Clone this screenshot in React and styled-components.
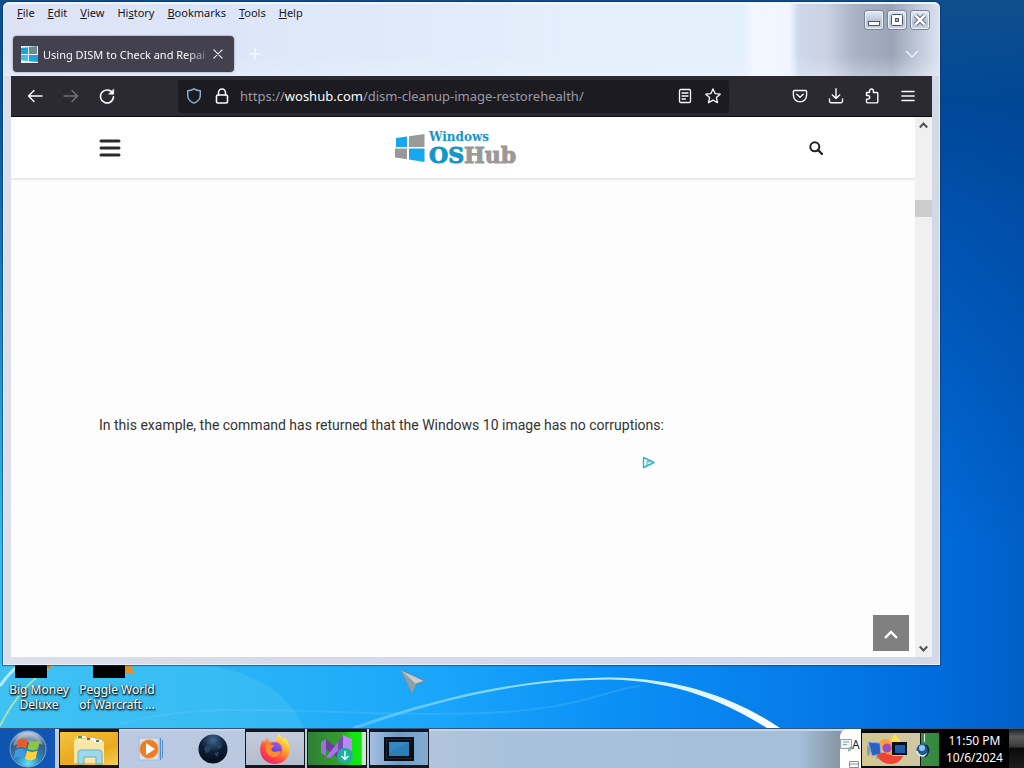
import React from "react";
import styled, { createGlobalStyle, css } from "styled-components";

const Global = createGlobalStyle`
  *, *::before, *::after { box-sizing: border-box; }
  html, body, #root { height: 100%; }
  body { margin: 0; overflow: hidden; font-family: "Noto Sans", "Open Sans", sans-serif; font-size: 12px; }
  button { border: 0; padding: 0; margin: 0; background: none; font: inherit; color: inherit; }
  svg { display: block; flex: none; }
`;

/* ---------- desktop ---------- */

const Desktop = styled.div`
  display: flex;
  flex-direction: column;
  min-height: 100vh;
  background: #005fd0;
`;

const Workspace = styled.main`
  position: relative;
  flex: 1;
  display: flex;
  flex-direction: column;
  justify-content: flex-end;
  overflow: hidden;
  background:
    linear-gradient(#0f4f8c 0%, rgba(0, 66, 140, 0.85) 14%, rgba(0, 68, 150, 0.65) 30%, rgba(0, 78, 180, 0) 75%),
    linear-gradient(90deg, #35bdf2 0%, #28b2f6 25%, #1aa7fb 42%, #0b90f6 60%, #067ce9 78%, #006bdb 92%, #005fc8 100%);
`;

const Wallpaper = styled.svg`
  position: absolute;
  left: 0;
  bottom: 0;
  width: 100%;
  height: 64px;
`;

const Shortcuts = styled.ul`
  position: relative;
  display: flex;
  margin: 0;
  padding: 0 0 16px;
  list-style: none;
`;

const Shortcut = styled.li`
  display: flex;
  flex-direction: column;
  align-items: center;
  gap: 4px;
  width: 78px;
  color: #fff;
  line-height: 15px;
  text-align: center;
  text-shadow: 0 1px 2px #000, 1px 1px 2px #000;
  white-space: nowrap;
`;

const Pointer = styled.svg`
  position: absolute;
  left: 399px;
  bottom: 32px;
`;

/* ---------- browser window ---------- */

const Window = styled.section`
  position: absolute;
  inset: 2px 84px 63px 3px;
  display: flex;
  flex-direction: column;
  padding: 0 8px 8px;
  border-radius: 6px 6px 0 0;
  background: linear-gradient(90deg, #dcdfea 0%, #d5dae8 30%, #ced9f2 70%, #d3d8e6 100%);
  box-shadow: inset 0 0 0 1px #e6effb, 0 0 1px 1px rgba(10, 50, 110, 0.6);
`;

const TitleArea = styled.header`
  display: flex;
  justify-content: space-between;
  height: 74px;
  margin: 0 -7px;
  padding: 0 9px 4px;
  border-radius: 6px 6px 0 0;
  border-top: 2px solid #eef5fc;
  background:
    linear-gradient(rgba(240, 245, 255, 0) 72%, rgba(240, 245, 255, 0.35) 100%),
    linear-gradient(90deg, #dde3f5 0, #dce6f8 25%, #e3effb 60%, #e4effc 79%, #f1f6ff 80%, #f1f5ff 84%, #cdd8ec 85%, #c9d1e2 88%, #a8b2c5 91%, #9aa5b8 95%, #c3cbda 98%, #d9e2f2 100%);
`;

const TitleLeft = styled.div`
  display: flex;
  flex-direction: column;
  justify-content: space-between;
`;

const TitleRight = styled.div`
  display: flex;
  flex-direction: column;
  justify-content: space-between;
  align-items: flex-end;
  padding: 6px 0 10px;
`;

const MenuBar = styled.nav`
  display: flex;
  gap: 1px;
  margin-left: -2px;
`;

const MenuItem = styled.button`
  padding: 0 6px;
  color: #15151c;
  font-size: 11px;
  line-height: 18px;
`;

const TabStrip = styled.div`
  display: flex;
  align-items: center;
  gap: 13px;
  height: 36px;
`;

const Tab = styled.div`
  display: flex;
  align-items: center;
  width: 221px;
  height: 36px;
  padding: 0 8px;
  border-radius: 4px;
  background: #42414d;
  box-shadow: 0 0 2px rgba(0, 0, 0, 0.5);
  color: #fbfbfe;
`;

const TabTitle = styled.span`
  flex: 1;
  margin: 0 0 0 5px;
  font-size: 11px;
  white-space: nowrap;
  mask-image: linear-gradient(90deg, #000 86%, transparent 102%);
`;

const SmallButton = styled.button`
  display: flex;
  align-items: center;
  justify-content: center;
  width: 16px;
  height: 16px;
`;

const WindowControls = styled.div`
  display: flex;
  gap: 3px;
`;

const WindowControl = styled.button`
  display: flex;
  align-items: center;
  justify-content: center;
  width: 20px;
  height: 20px;
  border: 1px solid #77839a;
  border-radius: 3px;
  background: linear-gradient(#e4eaf6, #b9c3d6 60%, #c9d2e3);
  box-shadow: inset 0 0 0 1px #eef3fc;
`;

const TabListSlot = styled.div`
  padding-right: 10px;
`;

const Toolbar = styled.div`
  display: flex;
  align-items: center;
  height: 41px;
  padding: 0 6px;
  background: #2b2a33;
  border-bottom: 1px solid #0c0c0d;
`;

const ToolButton = styled.button`
  display: flex;
  align-items: center;
  justify-content: center;
  width: ${(p) => (p.$narrow ? 28 : 36)}px;
  height: 32px;
  color: ${(p) => (p.$dim ? "#73727c" : "#fbfbfe")};
`;

const UrlBar = styled.div`
  flex: 1;
  display: flex;
  align-items: center;
  height: 33px;
  margin: 0 53px;
  padding: 0 2px;
  border-radius: 3px;
  background: #1c1b22;
`;

const UrlField = styled.label`
  position: relative;
  flex: 1;
  display: flex;
  margin-left: 4px;
  font-size: 13px;
  line-height: 20px;
  white-space: nowrap;
`;

const UrlInput = styled.input`
  position: absolute;
  inset: 0;
  width: 100%;
  border: 0;
  padding: 0;
  background: transparent;
  color: transparent;
  font: inherit;
  outline: 0;
`;

const UrlText = styled.span`
  color: #9b9aa3;
  b { color: #fbfbfe; font-weight: 400; }
`;

/* ---------- web page ---------- */

const Viewport = styled.div`
  flex: 1;
  display: flex;
  min-height: 0;
  background: #fdfdfd;
`;

const Page = styled.div`
  position: relative;
  flex: 1;
  min-width: 0;
  overflow: hidden;
  color: #333;
`;

const SiteHeader = styled.header`
  display: flex;
  align-items: center;
  justify-content: space-between;
  height: 62px;
  padding: 0 92px 0 88px;
  background: #fff;
  border-bottom: 1px solid #e6e6e6;
  box-shadow: 0 1px 2px rgba(0, 0, 0, 0.08);
`;

const SiteButton = styled.button`
  display: flex;
  align-items: center;
  justify-content: ${(p) => (p.$end ? "flex-end" : "flex-start")};
  width: ${(p) => (p.$end ? 32 : 22)}px;
  height: 32px;
`;

const Brand = styled.a`
  display: flex;
  align-items: center;
  gap: 4px;
  width: 122px;
  color: #1595c9;
  font-family: "DejaVu Serif", serif;
  font-weight: 700;
  text-decoration: none;
`;

const BrandName = styled.span`
  display: flex;
  flex-direction: column;
`;

const BrandTop = styled.span`
  font-size: 12px;
  line-height: 14px;
`;

const BrandMain = styled.span`
  font-size: 22px;
  line-height: 22px;
  -webkit-text-stroke: 1px currentColor;
  i { color: #999; font-style: normal; }
`;

const Article = styled.article`
  padding: 0 88px;
`;

const AdSlot = styled.div`
  height: 234px;
`;

const Paragraph = styled.p`
  margin: 0;
  font-family: Roboto, "Noto Sans", sans-serif;
  font-size: 14px;
  line-height: 24px;
  white-space: nowrap;
`;

const AdMarker = styled.div`
  display: flex;
  justify-content: flex-end;
  max-width: 556px;
  padding-top: 19px;
`;

const ToTop = styled.button`
  position: absolute;
  right: 6px;
  bottom: 6px;
  display: flex;
  align-items: center;
  justify-content: center;
  width: 36px;
  height: 36px;
  padding-top: 4px;
  background: #808080;
`;

const Scrollbar = styled.div`
  display: flex;
  flex-direction: column;
  width: 17px;
  background: #f0f0f0;
`;

const ScrollArrow = styled.button`
  display: flex;
  align-items: center;
  justify-content: center;
  height: 17px;
`;

const ScrollTrack = styled.div`
  flex: 1;
  padding-top: 66px;
`;

const ScrollThumb = styled.div`
  height: 17px;
  background: #cdcdcd;
`;

/* ---------- taskbar ---------- */

const Taskbar = styled.footer`
  display: flex;
  height: 40px;
  border-top: 1px solid #33577d;
  background: linear-gradient(90deg, #bccbe2 0, #b9c8de 35%, #a8c0dc 50%, #a5bfdb 78%, #8896a3 82%);
  box-shadow: inset 0 2px 0 #c5d5e6;
`;

const StartButton = styled.button`
  display: flex;
  align-items: center;
  justify-content: center;
  width: 55px;
  margin-right: 4px;
  background: linear-gradient(90deg, #0d55ae, #1455b8);
`;

const TaskList = styled.div`
  flex: 1;
  display: flex;
  gap: 2px;
`;

const running = css`
  border: solid #15171c;
  border-width: 3px 1px;
`;

const taskFill = {
  explorer: "linear-gradient(160deg, #f6c33c, #e8a91e 60%, #f7cf55)",
  firefox: "linear-gradient(#c3cbdc, #b4bdcd)",
  studio: "linear-gradient(90deg, #2f7f36, #35a02f 60%, #11e411 75%, #12e812 92%, #cfe8d0 93%)",
  remote: "linear-gradient(90deg, #a6bfe0, #6f9cc8 50%, #86abd0)",
};

const TaskButton = styled.button`
  display: flex;
  align-items: center;
  justify-content: center;
  width: 60px;
  background: ${(p) => taskFill[p.$fill] || "none"};
  ${(p) => p.$fill && running}
`;

const LanguagePanel = styled.div`
  display: flex;
  flex-direction: column;
  justify-content: space-between;
  width: 21px;
  border-top-left-radius: 8px;
  background: #fff;
  color: #222;
`;

const LanguageRow = styled.div`
  display: flex;
  align-items: center;
  padding-top: 8px;
  line-height: 16px;
`;

const LanguageExtra = styled.div`
  display: flex;
  justify-content: flex-end;
  padding-right: 2px;
`;

const Tray = styled.div`
  display: flex;
  align-items: center;
  width: 79px;
  border: solid #0b0b0c;
  border-width: 4px 1px 2px;
  background: linear-gradient(90deg, #d3c78f, #cfc7a6 75%, #3d8d45 76%, #33883c);
`;

const Clock = styled.time`
  display: flex;
  flex-direction: column;
  justify-content: center;
  width: 69px;
  background: #000;
  color: #fff;
  line-height: 17px;
  text-align: center;
  white-space: nowrap;
`;

const ShowDesktop = styled.button`
  width: 15px;
  background: linear-gradient(#222 0, #5a5a5a 20%, #3a3a3a 45%, #0b0b0b 50%, #1e1e1e);
`;

/* ---------- icons ---------- */

const Line = ({ size = 16, w = 1.4, children, ...rest }) => (
  <svg width={size} height={size} viewBox="0 0 16 16" fill="none" stroke="currentColor" strokeWidth={w} strokeLinecap="round" strokeLinejoin="round" aria-hidden="true" {...rest}>
    {children}
  </svg>
);

const BackIcon = () => <Line><path d="M15 8H1.5M7 2.5 1.5 8 7 13.5" /></Line>;
const ForwardIcon = () => <Line><path d="M1 8h13.5M9 2.5 14.500 8 9 13.5" /></Line>;
const ReloadIcon = () => (
  <Line w={1.6}>
    <path d="M13.600 5.200A6.500 6.500 0 1 0 14.500 8.800" />
    <path d="M14.700 1.300v4.900H9.800z" fill="currentColor" strokeWidth="0.600" />
  </Line>
);
const ShieldIcon = () => <Line color="#8fb4cf"><path d="M8 .8c2 1.300 4.300 1.900 6.300 2v4.400c0 3.600-2.600 6.400-6.300 8-3.700-1.600-6.300-4.400-6.300-8V2.800C3.700 2.700 6 2.100 8 .8z" /></Line>;
const LockIcon = () => <Line w={1.6}><rect x="2.500" y="7" width="11" height="8" rx="1.200" /><path d="M4.500 7V4.500a3.500 3.500 0 0 1 7 0V7" /></Line>;
const ReaderIcon = () => <Line w={1.3}><rect x="2.500" y="1.500" width="11" height="13" rx="1.200" /><path d="M5 5h6M5 8h6M5 11h3.500" /></Line>;
const StarIcon = () => <Line w={1.3}><path d="m8 .9 2.100 4.700 5.100.6-3.800 3.400 1.100 5.100L8 12.100l-4.500 2.600 1.100-5.100L.8 6.200l5.100-.6z" /></Line>;
const PocketIcon = () => <Line><path d="M2.400 2.500h11.200c.6 0 1 .4 1 1v3.800a6.600 6.600 0 0 1-13.200 0V3.500c0-.6.4-1 1-1z" /><path d="M4.800 6.300 8 9.300l3.200-3" /></Line>;
const DownloadIcon = () => <Line><path d="M8 .8v9.700M4.300 7 8 10.600 11.700 7M1.500 11v2.300c0 .8.600 1.400 1.400 1.400h10.200c.8 0 1.400-.6 1.400-1.400V11" /></Line>;
const PuzzleIcon = () => <Line><path d="M2.500 4.500h3V3a1.900 1.900 0 0 1 3.900 0v1.500h3.400c.6 0 1 .4 1 1v8.400c0 .6-.4 1-1 1H3.500c-.6 0-1-.4-1-1v-2.800h1.400a1.800 1.800 0 0 0 0-3.600H2.500z" /></Line>;
const MenuIcon = () => <Line w={1.500}><path d="M2 3.500h12M2 8h12M2 12.500h12" /></Line>;

const WosFavicon = () => (
  <svg width="17" height="17" viewBox="0 0 17 17" aria-hidden="true">
    <path fill="#e8f1f5" d="M0 0h17v17H0z" />
    <path fill="#1ca4dc" d="m0 2 7-.8V8H0zM8 9h9v7l-9-.8z" />
    <path fill="#6f8a94" d="M8 1l8-1v8H8z" />
    <path fill="#45bde9" d="M0 9h7v6l-7-.8z" />
  </svg>
);

const BrandMark = () => (
  <svg width="30" height="30" viewBox="0 0 30 30" aria-hidden="true">
    <path fill="#15a8ee" d="M1 5l11-1.500v10.500H1z" />
    <path fill="#999" d="M14 3.200 29.500 1v13H14z" />
    <path fill="#999" d="M0 15.500h12v10.700L0 24.500z" />
    <path fill="#15a8ee" d="M14 15.500h15.500V29L14 26.600z" />
  </svg>
);

const StartOrb = () => (
  <svg width="38" height="38" viewBox="0 0 38 38" aria-hidden="true">
    <defs>
      <radialGradient id="orb" cx="50%" cy="90%" r="85%">
        <stop offset="0" stopColor="#62e0ff" />
        <stop offset="0.400" stopColor="#2a85bd" />
        <stop offset="0.800" stopColor="#34587f" />
        <stop offset="1" stopColor="#a9c0d2" />
      </radialGradient>
    </defs>
    <circle cx="19" cy="19" r="18" fill="url(#orb)" stroke="#7ea6c2" />
    <path d="M4 16C6 7 13 3 19 3s13 4 15 12c-9-4-20-4-30 1z" fill="#fff" opacity=".35" />
    <path fill="#ea5a2b" d="M9 10c3.500-2 7-2 10 0l-2 8.500c-3.500-2-7-2-10 0z" />
    <path fill="#8dc63f" d="M20.500 10.500c3 2 7 1.800 10.500 0l-2 8.500c-3.500 1.800-7 2-10.500 0z" />
    <path fill="#3f9be0" d="M6.600 20c3.500-2 7-2 10 0l-2 8.500c-3.500-2-7-2-10 0z" />
    <path fill="#ffd23b" d="M18 20.500c3.500 2 7 1.800 10.500 0l-2 8.500c-3.500 1.800-7 2-10.500 0z" />
  </svg>
);

const ExplorerIcon = () => (
  <svg width="34" height="32" viewBox="0 0 34 32" aria-hidden="true">
    <path fill="#e9c765" d="M2 4h12l2 3h15v22H2z" />
    <path fill="#f8e9ac" d="M4 6h22l6 3v20H2V8z" />
    <path fill="#fff" d="M5 3h9v2H5zM14 5h9v2h-9zM22 7h8v2h-8z" />
    <path fill="#3aa35a" d="M6 3h4v2H6z" /><path fill="#d2412e" d="M15 5h3v2h-3z" /><path fill="#3a78c9" d="M24 7h3v2h-3z" />
    <path fill="#f8e7a4" d="M2 10h30v20H2z" />
    <path fill="#9ed8ea" stroke="#62afca" d="M6 31V20q0-3 3-3h18q3 0 3 3v11h-6v-7H12v7z" />
  </svg>
);

const MediaIcon = () => (
  <svg width="28" height="26" viewBox="0 0 28 26" aria-hidden="true">
    <path fill="#d7e4f3" stroke="#9bbbdc" d="M2 2h20v22H2z" />
    <path stroke="#4b8fd0" d="M23.500 2v22M25.500 4v18" />
    <circle cx="12" cy="13" r="9.500" fill="#ee7d26" stroke="#f8b375" />
    <path fill="#fff" d="m9 7 9 6-9 6z" />
  </svg>
);

const GlobeIcon = () => (
  <svg width="30" height="30" viewBox="0 0 30 30" aria-hidden="true">
    <defs>
      <radialGradient id="globe" cx="50%" cy="20%" r="80%">
        <stop offset="0" stopColor="#3f6890" /><stop offset="0.500" stopColor="#0e2038" /><stop offset="1" stopColor="#060d18" />
      </radialGradient>
    </defs>
    <circle cx="15" cy="15" r="14.500" fill="url(#globe)" />
    <path d="M6 14l4-3 3 3-2 4-3 1zM17 10l5-1 2 4-4 2zM16 19l5-1-2 5z" fill="#28445f" />
  </svg>
);

const FirefoxIcon = ({ size = 32 }) => (
  <svg width={size} height={size} viewBox="0 0 32 32" aria-hidden="true">
    <defs>
      <linearGradient id="fox" x1="0.850" y1="0.100" x2="0.200" y2="1">
        <stop offset="0" stopColor="#fff44f" /><stop offset="0.350" stopColor="#ffa02c" /><stop offset="0.650" stopColor="#ff4a45" /><stop offset="1" stopColor="#e82064" />
      </linearGradient>
      <linearGradient id="core" x1="0.700" y1="0" x2="0.300" y2="1">
        <stop offset="0" stopColor="#a356e6" /><stop offset="1" stopColor="#4d3fc4" />
      </linearGradient>
    </defs>
    <path fill="url(#fox)" d="M20 1c2 1.500 3 3.500 3.500 5.500 1-.3 1.800-1 2-2C29 8 31 12.500 30.800 17 30.400 25 24 31 16 31S1.200 25 1.200 17C1.200 13.500 2 10 4 7c.2 1 .6 1.700 1 2.200C6 7 7.500 5.500 9 4.500c0 1.700.6 3 1.500 4 2.500-.8 5 0 6.500 1.500C16.500 6.500 17.500 3 20 1z" />
    <circle cx="16" cy="16" r="7" fill="url(#core)" />
    <path fill="#ff8a2e" d="M7 12c3-1.500 5-.8 8 .6 1 .8-2 1.500-2.600 3.400-.3 1.500 1.200 2.800 3.100 2.800 2.300 0 4-1 6.500-.4-1.500 4.500-5 6-8 5.500C9 23 5 18 7 12z" />
  </svg>
);

const StudioIcon = () => (
  <svg width="34" height="32" viewBox="0 0 34 32" aria-hidden="true">
    <path fill="#6c3fa0" d="M1 9l5-3 20 17-4 5L6 16z" />
    <path fill="#9c72d8" d="M1 9l5-3v17l-5-3z" />
    <path fill="#a578e0" d="M6 24 24 2v10L10 25z" />
    <path fill="#b98bee" d="M23 2l9 4v18l-9 4z" />
    <path fill="#7a4ab8" d="M23 2v24l-5-6V9z" />
    <circle cx="25" cy="23" r="8" fill="#1fae9c" />
    <path d="M25 18v8M21.500 23l3.500 3.500 3.500-3.500" fill="none" stroke="#e6fffa" strokeWidth="1.500" />
  </svg>
);

const RemoteIcon = () => (
  <svg width="30" height="24" viewBox="0 0 30 24" aria-hidden="true">
    <path fill="#0a0d12" d="M0 0h30v24H0z" />
    <path fill="#1a2a3a" d="M2 2h26v20H2z" />
    <path fill="#0a0d12" d="M3 3h25v18H3z" />
    <path fill="#2d7db8" d="M5 5h20v14H5z" />
    <path fill="#3a93cf" d="M5 5h20L5 15z" opacity=".5" />
  </svg>
);

const TrayIcons = () => (
  <svg width="77" height="33" viewBox="0 0 77 33" aria-hidden="true">
    <path fill="#2b62c4" stroke="#8fb2e4" d="M6 9l12 1 1 11-9 2z" />
    <path fill="#8a9bb5" d="M5 12l4 4-2 7-2-1zM15 21l4 4-5 1z" />
    <path fill="#ef4433" d="M15 22c3-2 7-3 11-2l5 3h10c-2 5-7 8-12 8-6 0-12-3-14-9z" />
    <path fill="#ff9d3c" d="M18 8c4-3 8-2 11 0l9 2-8 12-5-1-6-5z" />
    <path fill="#ffe23b" d="M33 1l6 8H28z" />
    <circle cx="25" cy="15" r="4.500" fill="#a04bc0" />
    <path fill="#08101c" d="M30 9h15v13H30z" />
    <path fill="#1d5aa8" d="M33 12h10v8H33z" />
    <path fill="none" stroke="#111" d="M58.500 0v33" />
    <path fill="none" stroke="#e5efe9" d="M62.500 1v8" />
    <circle cx="61" cy="17" r="6.500" fill="#205a8d" />
    <circle cx="60" cy="15" r="3" fill="#8fc6ea" />
    <path fill="none" stroke="#e8f2f7" strokeWidth="1.500" d="M55 18c1 5 7 7 11 2" />
    <path fill="none" stroke="#10283f" strokeWidth="1.500" d="M64 12c4 4 3 9-1 12" />
  </svg>
);

/* ---------- composition ---------- */

const menus = ["File", "Edit", "View", "History", "Bookmarks", "Tools", "Help"];

const MenuLabel = ({ text }) => {
  const at = text === "History" ? 2 : 0;
  return (
    <MenuItem>
      {text.slice(0, at)}
      <u>{text[at]}</u>
      {text.slice(at + 1)}
    </MenuItem>
  );
};

const BrowserWindow = () => (
  <Window aria-label="Browser window">
    <TitleArea>
      <TitleLeft>
        <MenuBar>{menus.map((m) => <MenuLabel key={m} text={m} />)}</MenuBar>
        <TabStrip>
          <Tab>
            <WosFavicon />
            <TabTitle>Using DISM to Check and Repai</TabTitle>
            <SmallButton aria-label="Close tab"><Line size={12}><path d="M2.500 2.500l11 11M13.500 2.500l-11 11" /></Line></SmallButton>
          </Tab>
          <SmallButton aria-label="New tab"><Line size={14} color="#f4f8ff" w={1.600}><path d="M8 2v12M2 8h12" /></Line></SmallButton>
        </TabStrip>
      </TitleLeft>
      <TitleRight>
        <WindowControls>
          <WindowControl aria-label="Minimize">
            <svg width="14" height="14" viewBox="0 0 14 14"><rect x="1.500" y="8.500" width="11" height="4" fill="#fff" stroke="#4c566b" /></svg>
          </WindowControl>
          <WindowControl aria-label="Maximize">
            <svg width="14" height="14" viewBox="0 0 14 14"><rect x="1.500" y="1.500" width="11" height="11" rx="1" fill="#fff" stroke="#4c566b" /><rect x="5.500" y="5.500" width="3" height="3" fill="#a8b2c5" stroke="#4c566b" /></svg>
          </WindowControl>
          <WindowControl aria-label="Close">
            <svg width="14" height="14" viewBox="0 0 14 14"><path d="M2.500 2.500l9 9M11.500 2.500l-9 9" stroke="#4c566b" strokeWidth="4.500" /><path d="M2.500 2.500l9 9M11.500 2.500l-9 9" stroke="#fff" strokeWidth="2.500" /></svg>
          </WindowControl>
        </WindowControls>
        <TabListSlot>
          <SmallButton aria-label="List all tabs"><Line color="#eef4fb"><path d="M2.500 5.500 8 11l5.500-5.500" /></Line></SmallButton>
        </TabListSlot>
      </TitleRight>
    </TitleArea>

    <Toolbar>
      <ToolButton aria-label="Back"><BackIcon /></ToolButton>
      <ToolButton aria-label="Forward" $dim><ForwardIcon /></ToolButton>
      <ToolButton aria-label="Reload"><ReloadIcon /></ToolButton>
      <UrlBar>
        <ToolButton $narrow aria-label="Tracking protection"><ShieldIcon /></ToolButton>
        <ToolButton $narrow aria-label="Site information"><LockIcon /></ToolButton>
        <UrlField>
          <UrlText>https://<b>woshub.com</b>/dism-cleanup-image-restorehealth/</UrlText>
          <UrlInput aria-label="Address" type="text" />
        </UrlField>
        <ToolButton $narrow aria-label="Reader view"><ReaderIcon /></ToolButton>
        <ToolButton $narrow aria-label="Bookmark this page"><StarIcon /></ToolButton>
      </UrlBar>
      <ToolButton aria-label="Pocket"><PocketIcon /></ToolButton>
      <ToolButton aria-label="Downloads"><DownloadIcon /></ToolButton>
      <ToolButton aria-label="Extensions"><PuzzleIcon /></ToolButton>
      <ToolButton aria-label="Application menu"><MenuIcon /></ToolButton>
    </Toolbar>

    <Viewport>
      <Page>
        <SiteHeader>
          <SiteButton aria-label="Menu">
            <svg width="22" height="18" viewBox="0 0 22 18"><path d="M2 2h18M2 9h18M2 16h18" stroke="#2b2b2b" strokeWidth="3" strokeLinecap="round" /></svg>
          </SiteButton>
          <Brand href="#home">
            <BrandMark />
            <BrandName>
              <BrandTop>Windows</BrandTop>
              <BrandMain>OS<i>Hub</i></BrandMain>
            </BrandName>
          </Brand>
          <SiteButton $end aria-label="Search">
            <svg width="14" height="14" viewBox="0 0 14 14" fill="none" stroke="#222" strokeWidth="2"><circle cx="5.800" cy="5.800" r="4.500" /><path d="M9 9l4 4" strokeWidth="2.400" strokeLinecap="round" /></svg>
          </SiteButton>
        </SiteHeader>
        <Article>
          <AdSlot />
          <Paragraph>In this example, the command has returned that the Windows 10 image has no corruptions:</Paragraph>
          <AdMarker>
            <svg width="13" height="13" viewBox="0 0 13 13" fill="none" stroke="#25b7bd" strokeWidth="1.400" strokeLinejoin="round"><path d="M1.500 1.500v10l10.500-5z" /><path d="M5 5v4M5 5l3 1.500" strokeWidth="1" /></svg>
          </AdMarker>
        </Article>
        <ToTop aria-label="Back to top">
          <svg width="16" height="10" viewBox="0 0 16 10"><path d="M2 8l6-6 6 6" fill="none" stroke="#fff" strokeWidth="2.400" /></svg>
        </ToTop>
      </Page>
      <Scrollbar>
        <ScrollArrow aria-label="Scroll up"><svg width="9" height="7" viewBox="0 0 9 7"><path d="M.8 5.500l3.700-4 3.700 4" fill="none" stroke="#505050" strokeWidth="2" /></svg></ScrollArrow>
        <ScrollTrack><ScrollThumb /></ScrollTrack>
        <ScrollArrow aria-label="Scroll down"><svg width="9" height="7" viewBox="0 0 9 7"><path d="M.8 1.500l3.700 4 3.700-4" fill="none" stroke="#505050" strokeWidth="2" /></svg></ScrollArrow>
      </Scrollbar>
    </Viewport>
  </Window>
);

export default function App() {
  return (
    <Desktop>
      <Global />
      <Workspace>
        <Wallpaper viewBox="0 0 1024 64" preserveAspectRatio="none" aria-hidden="true">
          <defs>
            <linearGradient id="streak" x1="0" x2="1">
              <stop offset="0" stopColor="#8fdcff" stopOpacity="0.400" />
              <stop offset="0.500" stopColor="#a5e6ff" />
              <stop offset="1" stopColor="#fff" />
            </linearGradient>
          </defs>
          <path d="M200 0Q280 10 304 64H0V0z" fill="#5fd2f5" opacity=".25" />
          <path d="M0 62Q20 22 54 0" fill="none" stroke="#d3ee9d" strokeWidth="2" opacity=".7" />
          <path d="M0 22Q8 10 20 0" fill="none" stroke="#e6fbff" strokeWidth="3" opacity=".7" />
          <path d="M120 60C200 36 300 50 440 50S600 26 640 22" fill="none" stroke="#7bd2ff" strokeWidth="2" opacity=".2" />
          <path d="M352 63C445 31 525 14 610 13.500c75 1 127 22 170 50.500h-13C728 40 680 17 610 15.500C525 16 447 33 356 65z" fill="url(#streak)" />
        </Wallpaper>
        <Shortcuts>
          <Shortcut>
            <svg width="48" height="32" viewBox="0 0 48 32" aria-hidden="true"><path fill="#c98a3a" d="M30 16h9l-4 7h-5z" /><path d="M0 0h32v32H0z" /></svg>
            <span>Big Money<br />Deluxe</span>
          </Shortcut>
          <Shortcut>
            <svg width="48" height="32" viewBox="0 0 48 32" aria-hidden="true"><path fill="#e0912f" d="M32 16h9l-3 5 4 6H32z" /><path d="M0 0h32v32H0z" /></svg>
            <span>Peggle World<br />of Warcraft ...</span>
          </Shortcut>
        </Shortcuts>
        <BrowserWindow />
        <Pointer width="28" height="28" viewBox="0 0 28 28" aria-hidden="true">
          <path d="M2 2l24 11-9 3-4 9z" fill="#c3ced6" stroke="#6f8794" strokeLinejoin="round" />
          <path d="M2 2l15 14-4 9z" fill="#8c9fab" />
        </Pointer>
      </Workspace>
      <Taskbar>
        <StartButton aria-label="Start"><StartOrb /></StartButton>
        <TaskList>
          <TaskButton $fill="explorer" aria-label="File Explorer"><ExplorerIcon /></TaskButton>
          <TaskButton aria-label="Media Player"><MediaIcon /></TaskButton>
          <TaskButton aria-label="Globe"><GlobeIcon /></TaskButton>
          <TaskButton $fill="firefox" aria-label="Firefox"><FirefoxIcon /></TaskButton>
          <TaskButton $fill="studio" aria-label="Visual Studio Installer"><StudioIcon /></TaskButton>
          <TaskButton $fill="remote" aria-label="Virtual machine"><RemoteIcon /></TaskButton>
        </TaskList>
        <LanguagePanel>
          <LanguageRow>
            <svg width="12" height="14" viewBox="0 0 12 14" aria-hidden="true"><path d="M.5 1.500h11v9H.5zM3 4h6M3 6.500h4M8 13l3-1-1-3z" fill="#eef3f3" stroke="#8aa3a6" /></svg>
            A
          </LanguageRow>
          <LanguageExtra>
            <svg width="10" height="7" viewBox="0 0 10 7" aria-hidden="true"><path d="M.5.500h9v6h-9zM1 3h8" fill="#fff" stroke="#7d8f99" /></svg>
          </LanguageExtra>
        </LanguagePanel>
        <Tray><TrayIcons /></Tray>
        <Clock>
          <span>11:50 PM</span>
          <span>10/6/2024</span>
        </Clock>
        <ShowDesktop aria-label="Show desktop" />
      </Taskbar>
    </Desktop>
  );
}
